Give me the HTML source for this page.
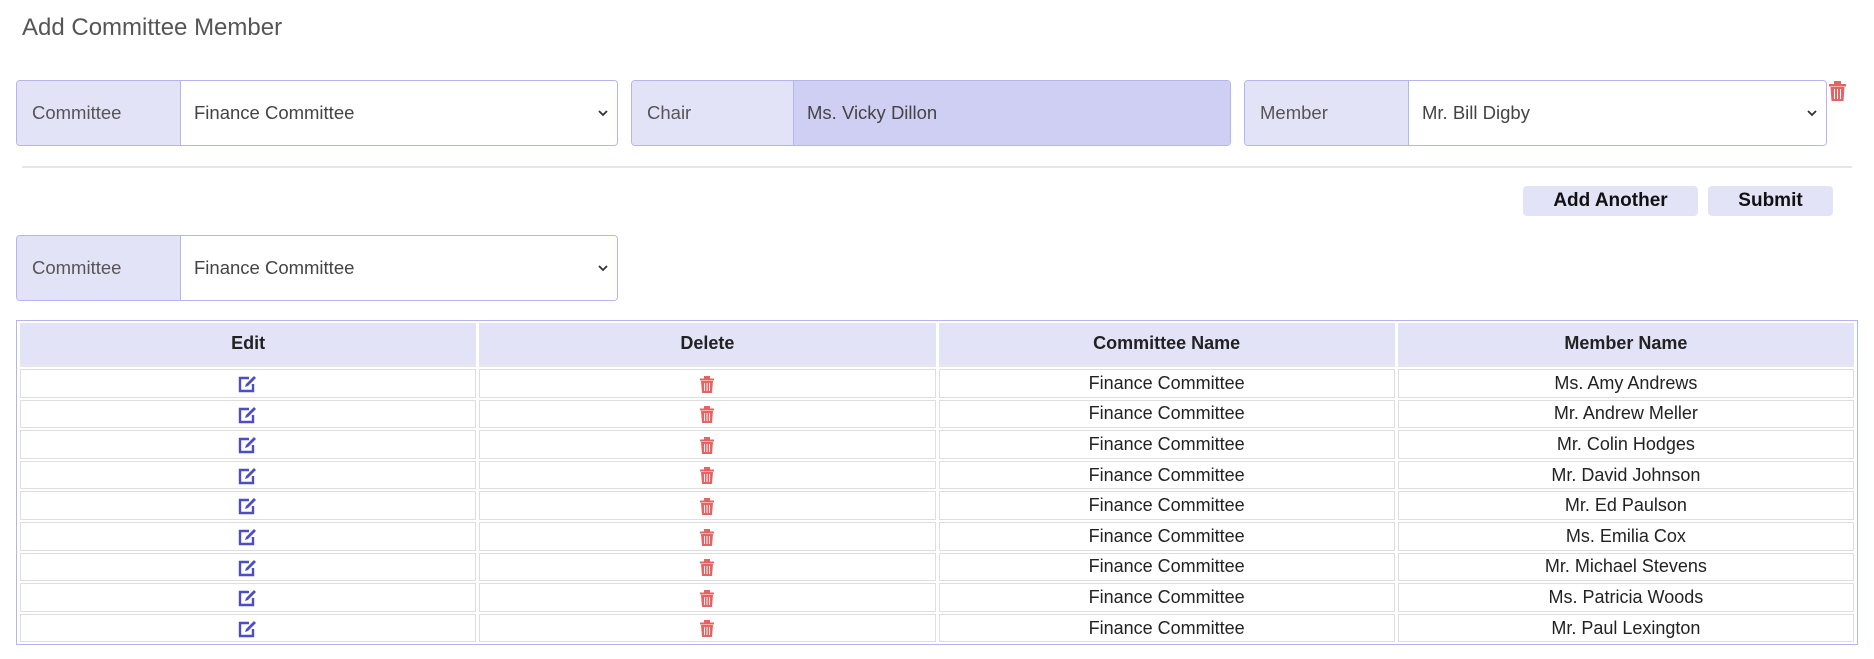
<!DOCTYPE html>
<html><head><style>
*{box-sizing:border-box;margin:0;padding:0}
body{width:1874px;height:659px;background:#fff;font-family:"Liberation Sans",Arial,sans-serif;position:relative;overflow:hidden;color:#222}
.title{position:absolute;left:22px;top:14px;font-size:24px;color:#555}
.grp{position:absolute;height:66px;display:flex;border:1px solid #b4b4ee;border-radius:4px;overflow:hidden}
.lab{background:#e3e3f8;color:#555;font-size:18.5px;display:flex;align-items:center;padding-left:15px;border-right:1px solid #b4b4ee}
.val{flex:1;background:#fff;color:#444;font-size:18.5px;display:flex;align-items:center;padding-left:13px;position:relative}
.val.ro{background:#cfcff3}
.chev{position:absolute;right:8px;top:27px}
.hr{position:absolute;left:22px;width:1830px;top:166px;height:2px;background:#e6e6e6}
.btn{position:absolute;top:186px;height:30px;background:#e3e3f8;border-radius:4px;font-weight:bold;font-size:19px;display:flex;align-items:center;justify-content:center;color:#111}
table{position:absolute;left:16px;top:320px;width:1842px;border:1px solid #b4b4ee;border-collapse:separate;border-spacing:3px 2px}
th{background:#e3e3f8;height:44px;font-size:18px;font-weight:bold;color:#222;border-bottom:3px solid #e6e6ee}
td{height:28.6px;border:1px solid #dedede;text-align:center;font-size:18px;color:#222;width:25%;padding:0}
td svg{vertical-align:middle}
</style></head><body>
<div class="title">Add Committee Member</div>

<div class="grp" style="left:16px;top:80px;width:602px">
<div class="lab" style="width:164px">Committee</div>
<div class="val">Finance Committee<svg class="chev" width="12" height="10" viewBox="0 0 12 10"><path d="M2 3l4 4 4-4" stroke="#333" stroke-width="1.8" fill="none"/></svg></div></div>

<div class="grp" style="left:631px;top:80px;width:600px">
<div class="lab" style="width:162px">Chair</div>
<div class="val ro">Ms. Vicky Dillon</div></div>

<div class="grp" style="left:1244px;top:80px;width:583px">
<div class="lab" style="width:164px">Member</div>
<div class="val">Mr. Bill Digby<svg class="chev" width="12" height="10" viewBox="0 0 12 10"><path d="M2 3l4 4 4-4" stroke="#333" stroke-width="1.8" fill="none"/></svg></div></div>

<svg style="position:absolute;left:1829px;top:81px" width="17" height="20" viewBox="0 0 17 20"><rect x="0" y="3" width="17" height="2.5" fill="#e46464"/><rect x="5" y="0" width="7" height="3" fill="#e46464"/><path d="M1.5 6h14l-1 14h-12z" fill="#e46464"/><path d="M5.5 8v10M8.5 8v10M11.5 8v10" stroke="#fff" stroke-width="1"/></svg>

<div class="hr"></div>
<div class="btn" style="left:1523px;width:175px">Add Another</div>
<div class="btn" style="left:1708px;width:125px">Submit</div>

<div class="grp" style="left:16px;top:235px;width:602px">
<div class="lab" style="width:164px">Committee</div>
<div class="val">Finance Committee<svg class="chev" width="12" height="10" viewBox="0 0 12 10"><path d="M2 3l4 4 4-4" stroke="#333" stroke-width="1.8" fill="none"/></svg></div></div>

<table>
<tr><th>Edit</th><th>Delete</th><th>Committee Name</th><th>Member Name</th></tr>
<tr><td><svg width="20" height="18" viewBox="0 0 20 18"><path d="M11 3H2v13h13V9" stroke="#4d4dc4" stroke-width="2.4" fill="none"/><path d="M7 12l1-3 8-8 2 2-8 8z" fill="#4d4dc4"/></svg></td><td><svg width="14" height="17" viewBox="0 0 14 17"><rect x="0" y="2.5" width="14" height="2" fill="#e46464"/><rect x="4" y="0" width="6" height="2.5" fill="#e46464"/><path d="M1 5h12l-1 12H2z" fill="#e46464"/><path d="M4.5 7v8M7 7v8M9.5 7v8" stroke="#fff" stroke-width="0.9"/></svg></td><td>Finance Committee</td><td>Ms. Amy Andrews</td></tr>
<tr><td><svg width="20" height="18" viewBox="0 0 20 18"><path d="M11 3H2v13h13V9" stroke="#4d4dc4" stroke-width="2.4" fill="none"/><path d="M7 12l1-3 8-8 2 2-8 8z" fill="#4d4dc4"/></svg></td><td><svg width="14" height="17" viewBox="0 0 14 17"><rect x="0" y="2.5" width="14" height="2" fill="#e46464"/><rect x="4" y="0" width="6" height="2.5" fill="#e46464"/><path d="M1 5h12l-1 12H2z" fill="#e46464"/><path d="M4.5 7v8M7 7v8M9.5 7v8" stroke="#fff" stroke-width="0.9"/></svg></td><td>Finance Committee</td><td>Mr. Andrew Meller</td></tr>
<tr><td><svg width="20" height="18" viewBox="0 0 20 18"><path d="M11 3H2v13h13V9" stroke="#4d4dc4" stroke-width="2.4" fill="none"/><path d="M7 12l1-3 8-8 2 2-8 8z" fill="#4d4dc4"/></svg></td><td><svg width="14" height="17" viewBox="0 0 14 17"><rect x="0" y="2.5" width="14" height="2" fill="#e46464"/><rect x="4" y="0" width="6" height="2.5" fill="#e46464"/><path d="M1 5h12l-1 12H2z" fill="#e46464"/><path d="M4.5 7v8M7 7v8M9.5 7v8" stroke="#fff" stroke-width="0.9"/></svg></td><td>Finance Committee</td><td>Mr. Colin Hodges</td></tr>
<tr><td><svg width="20" height="18" viewBox="0 0 20 18"><path d="M11 3H2v13h13V9" stroke="#4d4dc4" stroke-width="2.4" fill="none"/><path d="M7 12l1-3 8-8 2 2-8 8z" fill="#4d4dc4"/></svg></td><td><svg width="14" height="17" viewBox="0 0 14 17"><rect x="0" y="2.5" width="14" height="2" fill="#e46464"/><rect x="4" y="0" width="6" height="2.5" fill="#e46464"/><path d="M1 5h12l-1 12H2z" fill="#e46464"/><path d="M4.5 7v8M7 7v8M9.5 7v8" stroke="#fff" stroke-width="0.9"/></svg></td><td>Finance Committee</td><td>Mr. David Johnson</td></tr>
<tr><td><svg width="20" height="18" viewBox="0 0 20 18"><path d="M11 3H2v13h13V9" stroke="#4d4dc4" stroke-width="2.4" fill="none"/><path d="M7 12l1-3 8-8 2 2-8 8z" fill="#4d4dc4"/></svg></td><td><svg width="14" height="17" viewBox="0 0 14 17"><rect x="0" y="2.5" width="14" height="2" fill="#e46464"/><rect x="4" y="0" width="6" height="2.5" fill="#e46464"/><path d="M1 5h12l-1 12H2z" fill="#e46464"/><path d="M4.5 7v8M7 7v8M9.5 7v8" stroke="#fff" stroke-width="0.9"/></svg></td><td>Finance Committee</td><td>Mr. Ed Paulson</td></tr>
<tr><td><svg width="20" height="18" viewBox="0 0 20 18"><path d="M11 3H2v13h13V9" stroke="#4d4dc4" stroke-width="2.4" fill="none"/><path d="M7 12l1-3 8-8 2 2-8 8z" fill="#4d4dc4"/></svg></td><td><svg width="14" height="17" viewBox="0 0 14 17"><rect x="0" y="2.5" width="14" height="2" fill="#e46464"/><rect x="4" y="0" width="6" height="2.5" fill="#e46464"/><path d="M1 5h12l-1 12H2z" fill="#e46464"/><path d="M4.5 7v8M7 7v8M9.5 7v8" stroke="#fff" stroke-width="0.9"/></svg></td><td>Finance Committee</td><td>Ms. Emilia Cox</td></tr>
<tr><td><svg width="20" height="18" viewBox="0 0 20 18"><path d="M11 3H2v13h13V9" stroke="#4d4dc4" stroke-width="2.4" fill="none"/><path d="M7 12l1-3 8-8 2 2-8 8z" fill="#4d4dc4"/></svg></td><td><svg width="14" height="17" viewBox="0 0 14 17"><rect x="0" y="2.5" width="14" height="2" fill="#e46464"/><rect x="4" y="0" width="6" height="2.5" fill="#e46464"/><path d="M1 5h12l-1 12H2z" fill="#e46464"/><path d="M4.5 7v8M7 7v8M9.5 7v8" stroke="#fff" stroke-width="0.9"/></svg></td><td>Finance Committee</td><td>Mr. Michael Stevens</td></tr>
<tr><td><svg width="20" height="18" viewBox="0 0 20 18"><path d="M11 3H2v13h13V9" stroke="#4d4dc4" stroke-width="2.4" fill="none"/><path d="M7 12l1-3 8-8 2 2-8 8z" fill="#4d4dc4"/></svg></td><td><svg width="14" height="17" viewBox="0 0 14 17"><rect x="0" y="2.5" width="14" height="2" fill="#e46464"/><rect x="4" y="0" width="6" height="2.5" fill="#e46464"/><path d="M1 5h12l-1 12H2z" fill="#e46464"/><path d="M4.5 7v8M7 7v8M9.5 7v8" stroke="#fff" stroke-width="0.9"/></svg></td><td>Finance Committee</td><td>Ms. Patricia Woods</td></tr>
<tr><td><svg width="20" height="18" viewBox="0 0 20 18"><path d="M11 3H2v13h13V9" stroke="#4d4dc4" stroke-width="2.4" fill="none"/><path d="M7 12l1-3 8-8 2 2-8 8z" fill="#4d4dc4"/></svg></td><td><svg width="14" height="17" viewBox="0 0 14 17"><rect x="0" y="2.5" width="14" height="2" fill="#e46464"/><rect x="4" y="0" width="6" height="2.5" fill="#e46464"/><path d="M1 5h12l-1 12H2z" fill="#e46464"/><path d="M4.5 7v8M7 7v8M9.5 7v8" stroke="#fff" stroke-width="0.9"/></svg></td><td>Finance Committee</td><td>Mr. Paul Lexington</td></tr>
</table>
</body></html>
